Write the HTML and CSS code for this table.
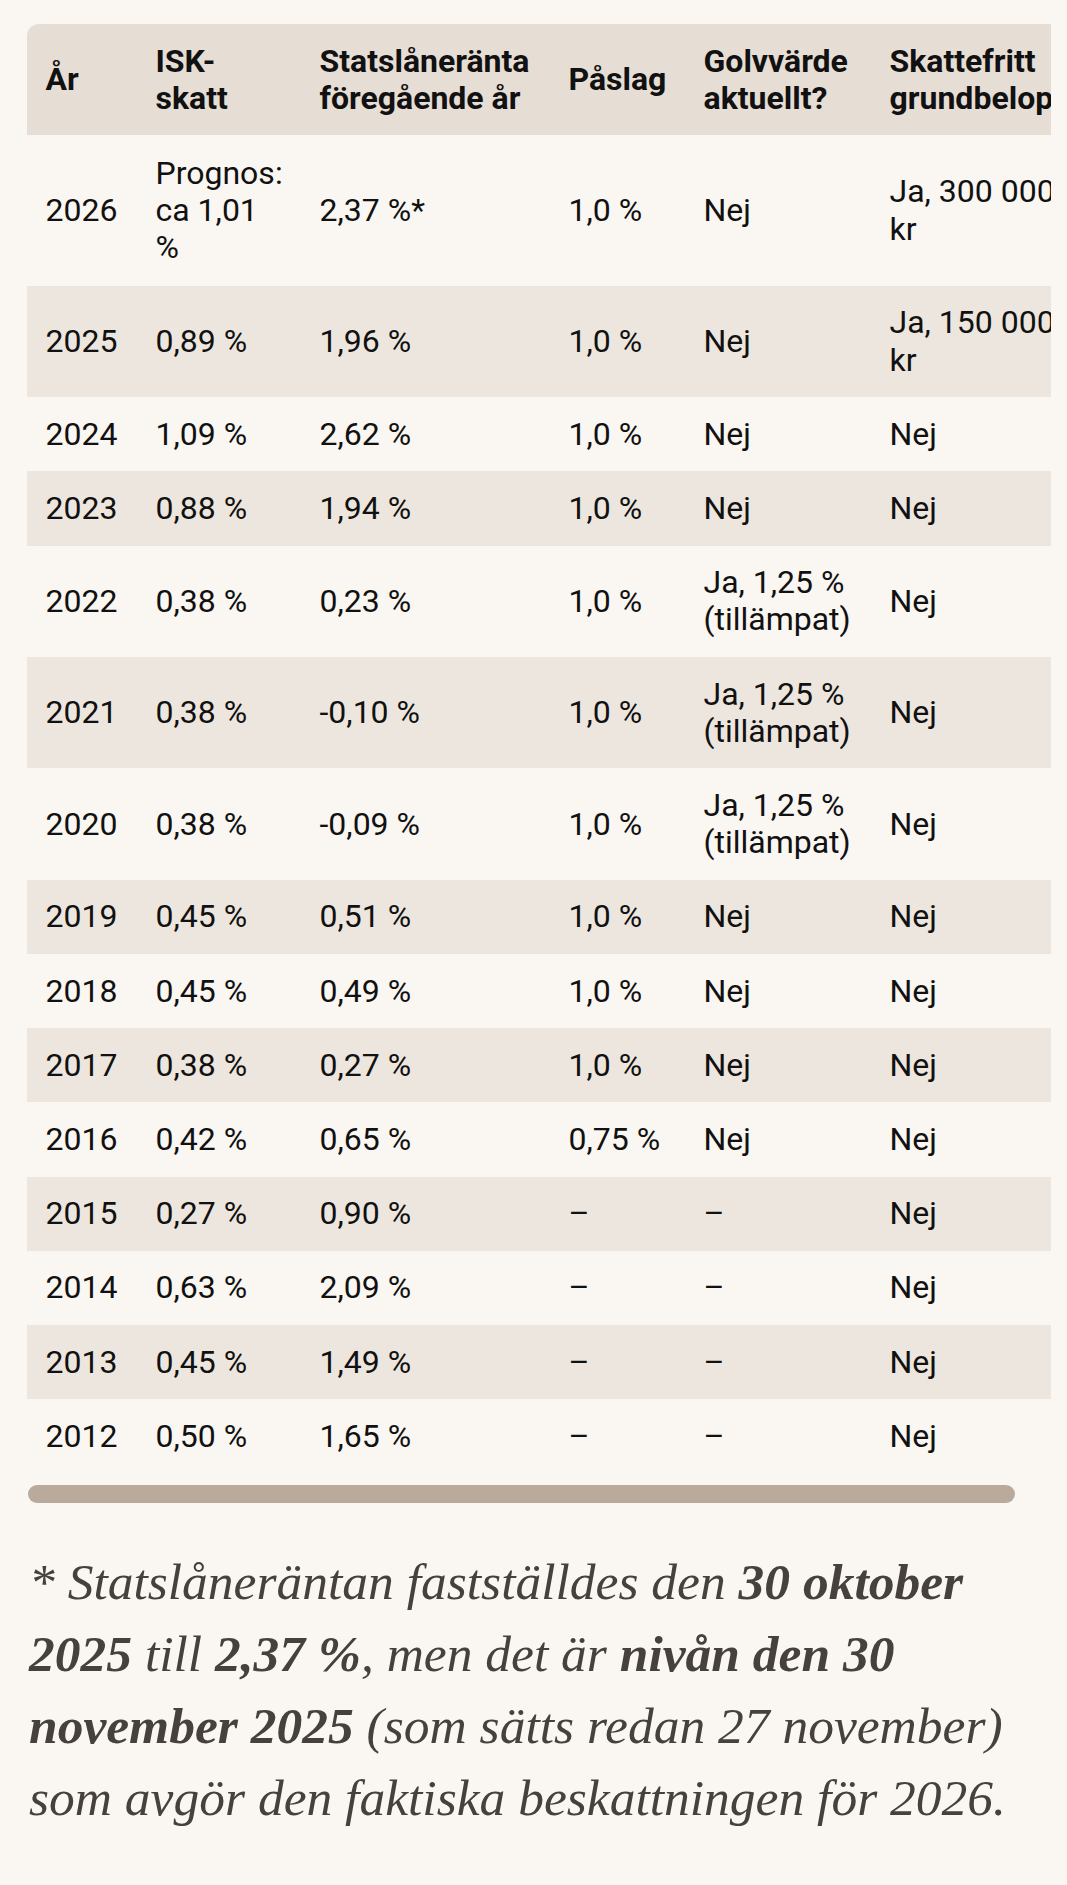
FILE: index.html
```html
<!DOCTYPE html>
<html lang="sv">
<head>
<meta charset="utf-8">
<title>ISK-skatt per år</title>
<link rel="stylesheet" href="styles.css">
</head>
<body>
<main class="page">
  <div class="table-scroll">
    <table class="isk">
      <colgroup>
        <col class="c-year"><col class="c-isk"><col class="c-rate"><col class="c-add"><col class="c-floor"><col class="c-free">
      </colgroup>
      <thead>
        <tr><th>År</th><th>ISK-skatt</th><th>Statslåneränta föregående år</th><th>Påslag</th><th>Golvvärde aktuellt?</th><th>Skattefritt grundbelopp</th></tr>
      </thead>
      <tbody>
        <tr class="tall"><td>2026</td><td>Prognos: ca 1,01 %</td><td>2,37 %*</td><td>1,0 %</td><td>Nej</td><td>Ja, 300&nbsp;000 kr</td></tr>
        <tr><td>2025</td><td>0,89 %</td><td>1,96 %</td><td>1,0 %</td><td>Nej</td><td>Ja, 150&nbsp;000 kr</td></tr>
        <tr><td>2024</td><td>1,09 %</td><td>2,62 %</td><td>1,0 %</td><td>Nej</td><td>Nej</td></tr>
        <tr><td>2023</td><td>0,88 %</td><td>1,94 %</td><td>1,0 %</td><td>Nej</td><td>Nej</td></tr>
        <tr><td>2022</td><td>0,38 %</td><td>0,23 %</td><td>1,0 %</td><td>Ja, 1,25 % (tillämpat)</td><td>Nej</td></tr>
        <tr><td>2021</td><td>0,38 %</td><td>-0,10 %</td><td>1,0 %</td><td>Ja, 1,25 % (tillämpat)</td><td>Nej</td></tr>
        <tr><td>2020</td><td>0,38 %</td><td>-0,09 %</td><td>1,0 %</td><td>Ja, 1,25 % (tillämpat)</td><td>Nej</td></tr>
        <tr><td>2019</td><td>0,45 %</td><td>0,51 %</td><td>1,0 %</td><td>Nej</td><td>Nej</td></tr>
        <tr><td>2018</td><td>0,45 %</td><td>0,49 %</td><td>1,0 %</td><td>Nej</td><td>Nej</td></tr>
        <tr><td>2017</td><td>0,38 %</td><td>0,27 %</td><td>1,0 %</td><td>Nej</td><td>Nej</td></tr>
        <tr><td>2016</td><td>0,42 %</td><td>0,65 %</td><td>0,75 %</td><td>Nej</td><td>Nej</td></tr>
        <tr><td>2015</td><td>0,27 %</td><td>0,90 %</td><td>–</td><td>–</td><td>Nej</td></tr>
        <tr><td>2014</td><td>0,63 %</td><td>2,09 %</td><td>–</td><td>–</td><td>Nej</td></tr>
        <tr><td>2013</td><td>0,45 %</td><td>1,49 %</td><td>–</td><td>–</td><td>Nej</td></tr>
        <tr><td>2012</td><td>0,50 %</td><td>1,65 %</td><td>–</td><td>–</td><td>Nej</td></tr>
      </tbody>
    </table>
  </div>
  <div class="scrollbar"><div class="scrollbar-thumb"></div></div>
  <p class="footnote">* Statslåneräntan fastställdes den <strong>30 oktober 2025</strong> till <strong>2,37 %</strong>, men det är <strong>nivån den 30 november 2025</strong> (som sätts redan 27 november) som avgör den faktiska beskattningen för 2026.</p>
</main>
</body>
</html>
```
FILE: styles.css
```css
html, body {
  margin: 0;
  padding: 0;
  background: #faf6f1;
}

.page {
  padding: 24px 16px 40px 27px;
}

.table-scroll {
  overflow: hidden;
  width: 1024px;
}

.isk {
  border-collapse: collapse;
  table-layout: fixed;
  width: 1061px;
  font-family: Roboto, "Liberation Sans", sans-serif;
  font-size: 32px;
  line-height: 37.2px;
  color: #111111;
}

.c-year { width: 110px; }
.c-isk { width: 164px; }
.c-rate { width: 249px; }
.c-add { width: 135px; }
.c-floor { width: 186px; }
.c-free { width: 217px; }

.isk th,
.isk td {
  padding: 18.5px 18.5px;
  text-align: left;
  vertical-align: middle;
}

.isk tr.tall td {
  padding-top: 19.4px;
  padding-bottom: 19.4px;
}

.isk th {
  font-weight: 700;
  background: #e6ddd4;
}

.isk thead th:first-child {
  border-top-left-radius: 12px;
}

.isk tbody tr:nth-child(even) td {
  background: #ede6de;
}

.scrollbar {
  margin-top: 12px;
  width: 1024px;
}

.scrollbar-thumb {
  margin-left: 1px;
  width: 987px;
  height: 18px;
  border-radius: 9px;
  background: #b9aa9b;
}

.footnote {
  margin: 43px 0 0 2px;
  font-family: "Liberation Serif", "Times New Roman", serif;
  font-style: italic;
  font-size: 51.5px;
  line-height: 72px;
  color: #46413c;
}

.footnote strong {
  font-weight: 700;
}
```
